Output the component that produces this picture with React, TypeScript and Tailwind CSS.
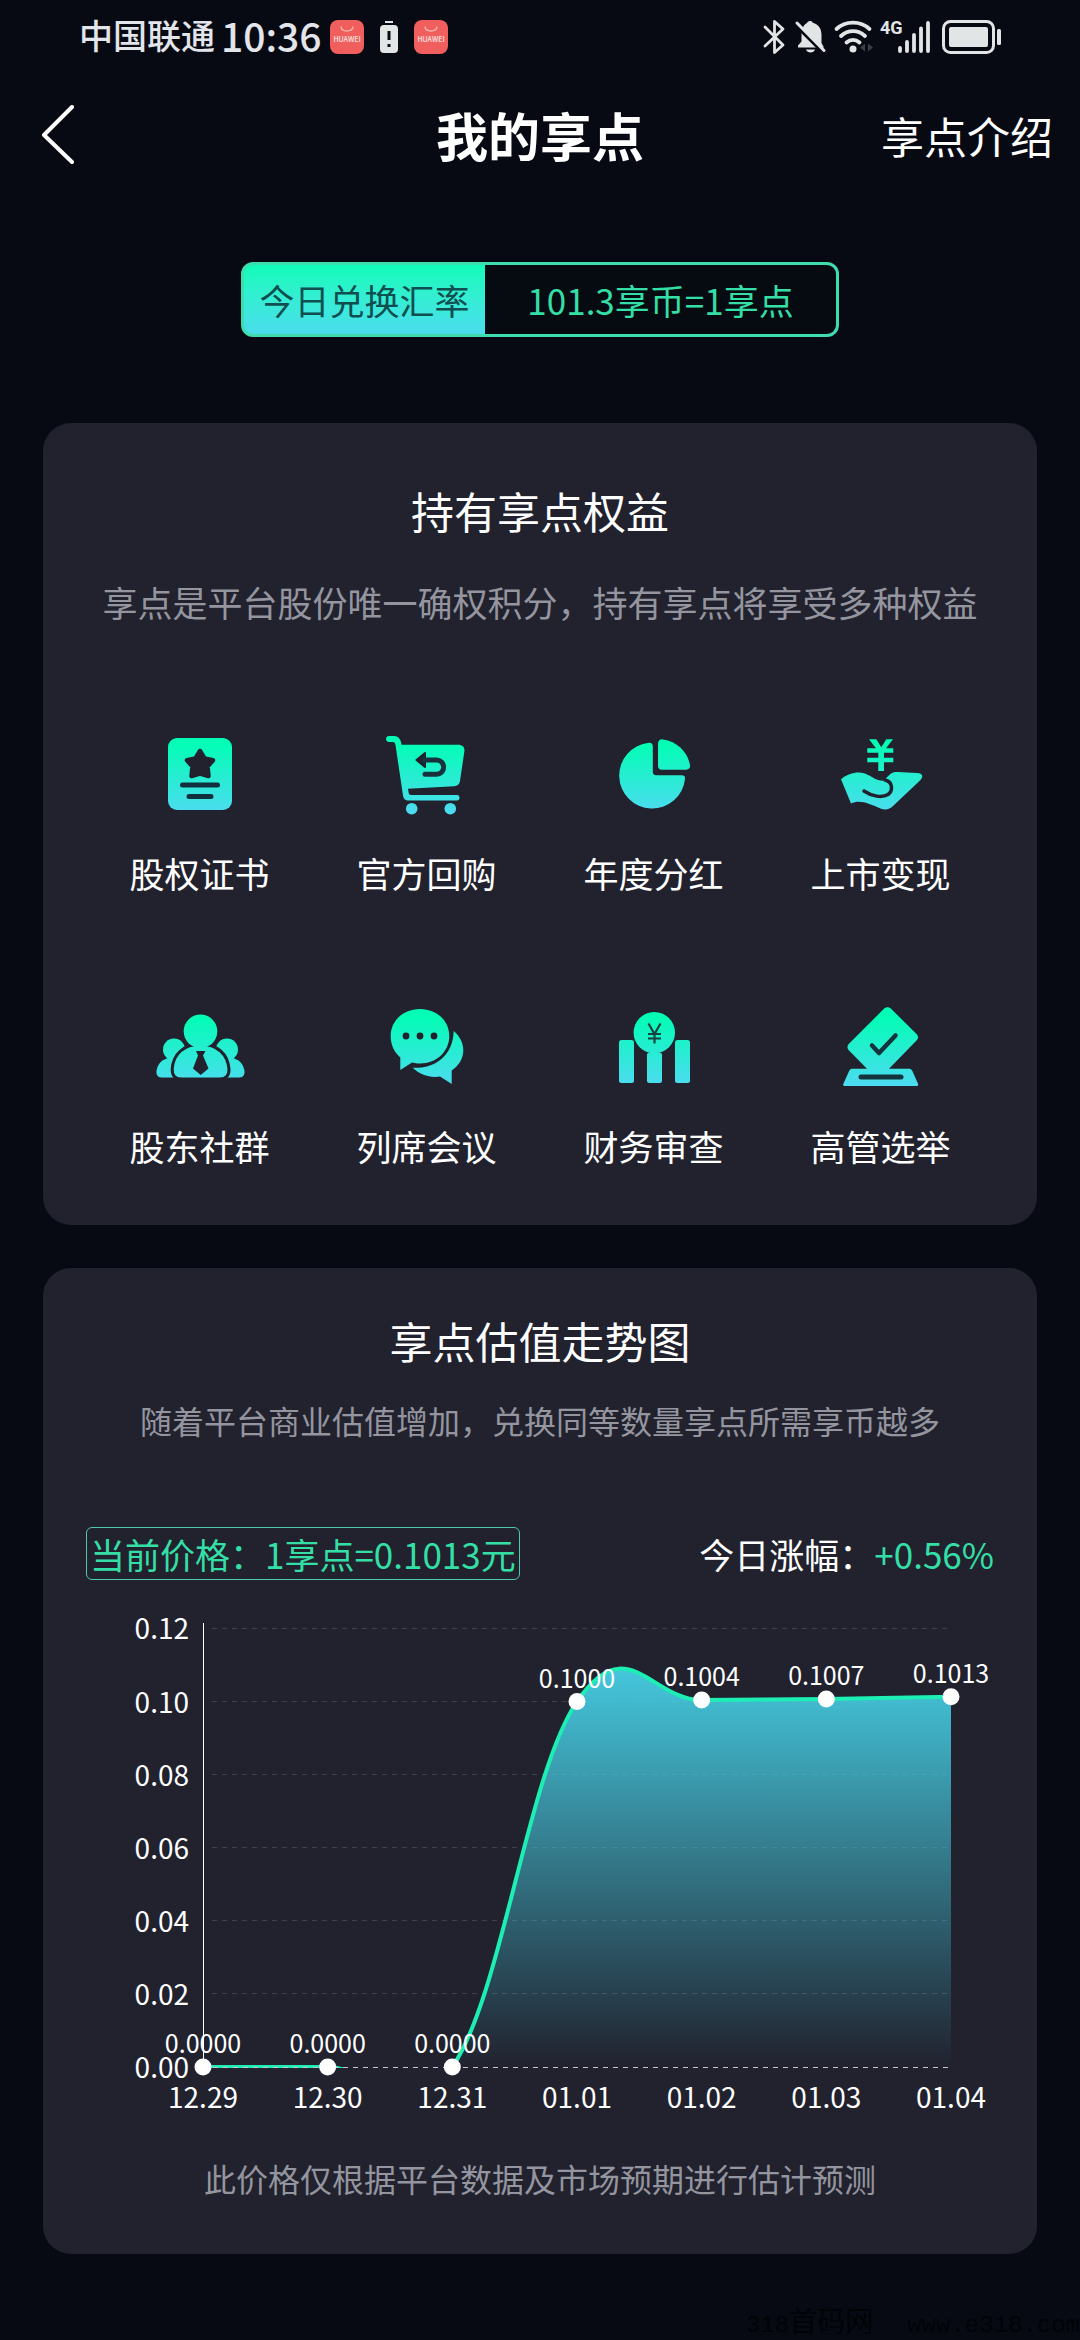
import { useId, type ReactNode } from "react";

interface Benefit {
  label: string;
  icon: ReactNode;
}

interface PricePoint {
  date: string;
  value: number;
}

// Holes in the icons are painted with the card colour
const CARD = "#21222e";

const IconFrame = ({ children }: { children: ReactNode }) => {
  const id = useId();
  return (
    <svg width="90" height="90" viewBox="0 0 90 90" fill={`url(#${id})`} aria-hidden="true">
      <defs>
        <linearGradient id={id} gradientUnits="userSpaceOnUse" x1="0" y1="16" x2="0" y2="82">
          <stop offset="0" stopColor="#04fdb6" />
          <stop offset="1" stopColor="#4bdcef" />
        </linearGradient>
      </defs>
      {children}
    </svg>
  );
};

const CertificateIcon = () => (
  <IconFrame>
    <rect x="13" y="9" width="64" height="72" rx="9" />
    <path
      d="M45 22l4.500 7.500 8.500 1.800-5.500 6.200 1 9.500-8.500-2.500-8.500 2.500 1-9.500-5.500-6.200 8.500-1.800z"
      fill={CARD}
      stroke={CARD}
      strokeWidth="4.500"
      strokeLinejoin="round"
    />
    <path d="M27.500 56h35M34 67.500h22" stroke="#11303d" strokeWidth="5" strokeLinecap="round" />
  </IconFrame>
);

const BuybackIcon = () => (
  <IconFrame>
    <path d="M7 7h5c4 0 7 3 7.500 8.700H76c5 0 7 3 6.300 7L78 52c-.6 3.500-2.500 5-6 5.200L26 59.700l.7 4.300c.3 1.300 1 2 2.500 2H75c3.400 0 3.400 5.500 0 5.500H27c-4 0-5.500-2-6-5L13.500 16c-.3-2-1-3-3-3H7c-4 0-4-6 0-6z" />
    <circle cx="29.700" cy="79.700" r="5.800" />
    <circle cx="68.300" cy="79.700" r="5.800" />
    <path d="M34.500 31l8.500-7v14z" fill={CARD} stroke={CARD} strokeWidth="2" strokeLinejoin="round" />
    <path d="M42 31h12.500a7 7 0 0 1 0 14.300H43" fill="none" stroke="#17313d" strokeWidth="5" strokeLinecap="round" />
  </IconFrame>
);

const DividendIcon = () => (
  <IconFrame>
    <path d="M40 13.700c2.500 0 3.800 1 3.800 3.500V43c0 2 1 3.200 3.200 3.200h25.500c3 0 3.700 1.300 3.500 4A33 33 0 1 1 40 13.700z" />
    <path d="M49 15c0-3 1.700-5 5-4.600A32 32 0 0 1 81 36c.5 3-1.500 4.700-4.500 4.700H53c-2.700 0-4-1.300-4-4z" />
  </IconFrame>
);

const ListingIcon = () => (
  <IconFrame>
    <path d="M33 10.300h7.300l5 8 5-8H57l-7 9h7.300v4.500H48v4.900h9.300v4.500H48V42h-5.700v-8.800h-11v-4.500h11v-4.900h-11v-4.500H40z" />
    <path d="M5 50.300C12 44 22 42 29 44.500c7 3 11 7 18 7.300 4-2.500 7-8.300 12-8.800 6-.5 14 .8 22 1 5 0 7 3 3.500 7L57 77c-3.500 3.500-7.500 4.300-12.500 2.500C34 75 24 70 15 74.500z" />
    <path
      d="M28 62c8 5.500 18 7 24 3.500 5.500-4 4.500-13-3-14.500"
      fill="none"
      stroke={CARD}
      strokeWidth="3.500"
      strokeLinecap="round"
    />
  </IconFrame>
);

const CommunityIcon = () => (
  <IconFrame>
    <circle cx="19" cy="47.500" r="11" />
    <circle cx="72" cy="47.500" r="11" />
    <path d="M7 75.700c-4 0-6-3-5.500-7C3 60 9 55.500 19 55.500V75.700zM84 75.700c4 0 6-3 5.500-7C88 60 82 55.500 72 55.500V75.700z" />
    <path
      d="M27 77.200c-7 0-10-4-9.800-10C18 52 29 42.200 45.500 42.200S73 52 74 67.200c.2 6-3 10-10 10z"
      stroke={CARD}
      strokeWidth="3"
    />
    <rect x="0" y="75.700" width="90" height="4" fill={CARD} />
    <circle cx="45.500" cy="29.300" r="16.800" />
    <path d="M41 49h9.500L48 53.500l5.500 13-7.800 6.500-7.700-6.500 5-13z" fill={CARD} />
  </IconFrame>
);

const MeetingIcon = () => (
  <IconFrame>
    <path d="M38 7c17 0 29.300 12 29.300 27S55 61.500 38 61.500c-2.500 0-6-.5-8-1L18.300 68V55.500C12 50 8.700 42.500 8.700 34 8.700 19 21 7 38 7z" />
    <path d="M71.700 29c6 5 9.600 12 9.600 19.500 0 8-4.500 15-11.600 20V82L58 74.500c-10 1.500-20-1.500-27.300-8.700C54 67 71 53 71.700 29z" />
    <g fill={CARD}>
      <circle cx="24" cy="34" r="3.400" />
      <circle cx="38" cy="34" r="3.400" />
      <circle cx="52" cy="34" r="3.400" />
    </g>
  </IconFrame>
);

const AuditIcon = () => (
  <IconFrame>
    <rect x="10" y="38" width="15" height="43" rx="2.500" />
    <rect x="38" y="50.500" width="15" height="30.500" rx="2.500" />
    <rect x="66" y="38" width="15" height="43" rx="2.500" />
    <circle cx="45.300" cy="30.700" r="20.700" />
    <path d="M39.500 21.500l6 10.500 6-10.500M39 32h13M39 36.500h13M45.500 32v9.500" fill="none" stroke="#14423f" strokeWidth="2.200" />
  </IconFrame>
);

const ElectionIcon = () => (
  <IconFrame>
    <path d="M48 6.700c2-2 5-2 7 0L80.500 32c2 2 2 4.600 0 6.600L53 66.700h19.500c2 0 3 .6 4 2.500l5.500 12.500c.5 1.600 0 2.300-1.600 2.300H9c-1.600 0-2.200-.8-1.600-2.300L13 69.200c.8-1.900 2-2.500 3.800-2.500H31L13 48.500c-2-2-2-4.700 0-6.700z" />
    <path d="M36 43.500l7 7.500 16.500-17.500" fill="none" stroke="#14343d" strokeWidth="4.500" strokeLinecap="round" strokeLinejoin="round" />
    <path d="M25 75h40" stroke="#14343d" strokeWidth="5" strokeLinecap="round" />
  </IconFrame>
);

const benefits: Benefit[] = [
  { label: "股权证书", icon: <CertificateIcon /> },
  { label: "官方回购", icon: <BuybackIcon /> },
  { label: "年度分红", icon: <DividendIcon /> },
  { label: "上市变现", icon: <ListingIcon /> },
  { label: "股东社群", icon: <CommunityIcon /> },
  { label: "列席会议", icon: <MeetingIcon /> },
  { label: "财务审查", icon: <AuditIcon /> },
  { label: "高管选举", icon: <ElectionIcon /> },
];

const prices: PricePoint[] = [
  { date: "12.29", value: 0 },
  { date: "12.30", value: 0 },
  { date: "12.31", value: 0 },
  { date: "01.01", value: 0.1 },
  { date: "01.02", value: 0.1004 },
  { date: "01.03", value: 0.1007 },
  { date: "01.04", value: 0.1013 },
];

const ticks = [0.12, 0.1, 0.08, 0.06, 0.04, 0.02, 0];

const LEFT = 117;
const RIGHT = 865;
const BASE = 467;
const px = (i: number) => LEFT + (i * (RIGHT - LEFT)) / (prices.length - 1);
const py = (value: number) => BASE - value * 3655;

// Smooth curve, each control point sits 20% along the neighbours' direction
const curve = () => {
  const pts = prices.map((p, i) => ({ x: px(i), y: py(p.value) }));
  const at = (i: number) => pts[Math.min(Math.max(i, 0), pts.length - 1)];
  let d = `M${pts[0].x} ${pts[0].y}`;
  for (let i = 1; i < pts.length; i++) {
    const a = at(i - 1);
    const b = at(i);
    const c1x = a.x + (b.x - at(i - 2).x) * 0.2;
    const c1y = a.y + (b.y - at(i - 2).y) * 0.2;
    const c2x = b.x - (at(i + 1).x - a.x) * 0.2;
    const c2y = b.y - (at(i + 1).y - a.y) * 0.2;
    d += `C${c1x} ${c1y} ${c2x} ${c2y} ${b.x} ${b.y}`;
  }
  return d;
};

const PriceChart = () => {
  const line = curve();
  return (
    <svg className="mt-5 block w-full" viewBox="0 0 908 520" role="img" aria-label="享点估值走势图">
      <defs>
        <linearGradient id="area" gradientUnits="userSpaceOnUse" x1="0" y1="68" x2="0" y2={BASE}>
          <stop offset="0" stopColor="#46d0e6" stopOpacity="0.95" />
          <stop offset="1" stopColor="#46d0e6" stopOpacity="0" />
        </linearGradient>
        <clipPath id="plot">
          <rect x={LEFT} y="0" width={RIGHT - LEFT} height={BASE + 1} />
        </clipPath>
      </defs>

      {ticks.map((t) => (
        <g key={t}>
          {t > 0 && (
            <line
              x1={LEFT + 9}
              x2={RIGHT}
              y1={py(t)}
              y2={py(t)}
              stroke="#3f404b"
              strokeWidth="1"
              strokeDasharray="5 5"
              shapeRendering="crispEdges"
            />
          )}
          <text x="103" y={py(t) + 11} textAnchor="end" fontSize="28" fill="#fff">
            {t.toFixed(2)}
          </text>
        </g>
      ))}
      <line x1={LEFT} x2={LEFT} y1="23" y2={BASE} stroke="#fff" strokeWidth="1" shapeRendering="crispEdges" />

      <path d={`${line}V${BASE}H${LEFT}Z`} fill="url(#area)" clipPath="url(#plot)" />
      <path d={line} fill="none" stroke="#1ceeb4" strokeWidth="4" clipPath="url(#plot)" />
      <line
        x1={LEFT}
        x2={RIGHT}
        y1={BASE}
        y2={BASE}
        stroke="#c5c6cf"
        strokeWidth="1"
        strokeDasharray="5 5"
        shapeRendering="crispEdges"
      />

      {prices.map((p, i) => (
        <g key={p.date} fill="#fff" textAnchor="middle">
          <circle cx={px(i)} cy={py(p.value)} r="8.500" />
          <text x={px(i)} y={py(p.value) - 14} fontSize="25">
            {p.value.toFixed(4)}
          </text>
          <text x={px(i)} y={BASE + 41} fontSize="28">
            {p.date}
          </text>
        </g>
      ))}
    </svg>
  );
};

const StoreBadge = () => (
  <svg width="34" height="34" viewBox="0 0 34 34" aria-hidden="true">
    <rect width="34" height="34" rx="8" fill="#f05f5e" />
    <path d="M11 6.500c.5 6 11.500 6 12 0" fill="none" stroke="#fbb0a8" strokeWidth="1.500" />
    <text x="17" y="22" textAnchor="middle" fontSize="7" fontWeight="500" fill="#ffe6e2">
      HUAWEI
    </text>
  </svg>
);

const StatusBar = () => (
  <div className="flex h-[74px] items-center justify-between pl-[79px] pr-[78px] text-[#e2e5ea]">
    <div className="flex items-center">
      <span className="pb-1 text-[34px] leading-none font-medium">中国联通</span>
      <span className="ml-1.5 pb-1 text-[39px] leading-none font-medium">10:36</span>
      <div className="ml-2 flex items-center gap-4">
        <StoreBadge />
        <svg width="18" height="34" viewBox="0 0 18 34" fill="#e2e5e6" aria-hidden="true">
          <path d="M5 1h8v2H5z" />
          <rect y="5" width="18" height="28" rx="4" />
          <path d="M9 11v9M9 24v3" stroke="#0a0d14" strokeWidth="3" />
        </svg>
        <StoreBadge />
      </div>
    </div>
    <svg width="240" height="36" viewBox="0 0 240 36" fill="none" stroke="#e2e5e6" aria-hidden="true">
      <path d="M3 8l18 18-8.500 7.500V2.500L21 10 3 27" strokeWidth="2.800" strokeLinejoin="round" strokeLinecap="round" />
      <path
        d="M48 2c1.500 0 2.300.6 2.800 1.700 6 1.700 8.700 6 8.700 12.300v8l2.500 4.500H36v-2l3.500-4V15c0-5 2-9 5.500-11 .5-1.200 1.500-2 3-2zM44 30.500h9c-1 4-8 4-9 0z"
        fill="#e2e5e6"
        stroke="none"
      />
      <path d="M35 7l29 29" stroke="#070a13" strokeWidth="4" />
      <path d="M35 4l27 27.500" strokeWidth="3" strokeLinecap="round" />
      <path d="M74.500 10c9-8.500 24-8.500 33 0M79 17c7-6.500 17-6.500 24 0M84.500 23.500c4-3.500 9-3.500 13 0" strokeWidth="3.800" strokeLinecap="round" />
      <circle cx="91" cy="30" r="3.500" fill="#e2e5e6" stroke="none" />
      <path d="M103 24.500v8l-5-4zM106 24.500v8l5-4z" fill="#3b3e46" stroke="none" />
      <text x="118" y="15" fontSize="18" fontWeight="700" fill="#e2e5e6" stroke="none" fontFamily="'Liberation Sans Narrow', Roboto, sans-serif">
        4G
      </text>
      <path d="M138 29v3M145 23v9M152 16v16M159 9.500v22.500M166 4v28" strokeWidth="3.800" strokeLinecap="round" />
      <rect x="181.500" y="2.500" width="50" height="31" rx="7" strokeWidth="3" />
      <rect x="187" y="8" width="39" height="20" rx="2" fill="#e2e5e6" stroke="none" />
      <rect x="235" y="10" width="4" height="16" rx="1.500" fill="#e2e5e6" stroke="none" />
    </svg>
  </div>
);

const App = () => {
  return (
    <div
      lang="zh-CN"
      className="flex min-h-screen flex-col overflow-hidden bg-[#070a13] font-['Noto_Sans_CJK_SC',sans-serif] text-white"
    >
      <StatusBar />

      <header className="grid h-[122px] grid-cols-3 items-center px-[27px]">
        <button type="button" aria-label="返回" className="ml-3.5 justify-self-start">
          <svg width="34" height="60" viewBox="0 0 34 60" fill="none" stroke="#fff" strokeWidth="4" strokeLinecap="round" strokeLinejoin="round">
            <path d="M31 2L3 30l28 27" />
          </svg>
        </button>
        <h1 className="text-center text-[52px] leading-[60px] font-bold">我的享点</h1>
        <a href="#intro" className="justify-self-end text-[43px] leading-[60px]">
          享点介绍
        </a>
      </header>

      <div className="mx-auto mt-[66px] flex h-[75px] overflow-hidden rounded-xl border-3 border-[#3fdcae] bg-gradient-to-b from-[#04fdb6] to-[#4bdcef] bg-origin-border text-[35px] leading-[69px]">
        <span className="w-[241px] text-center text-[#0f4f50]">今日兑换汇率</span>
        <span className="w-[351px] bg-[#060a11] text-center text-[#34dfa6]">101.3享币=1享点</span>
      </div>

      <section className="mx-[43px] mt-[86px] rounded-[28px] bg-[#21222e] px-[43px] pt-[57px] pb-[53px]">
        <h2 className="text-center text-[43px] leading-[60px]">持有享点权益</h2>
        <p className="mt-9 text-center text-[35px] leading-[52px] whitespace-nowrap text-[#94959f]">
          享点是平台股份唯一确权积分，持有享点将享受多种权益
        </p>
        <ul className="mt-[101px] grid grid-cols-4 gap-y-[103px]">
          {benefits.map((b) => (
            <li key={b.label} className="flex flex-col items-center">
              {b.icon}
              <span className="mt-7 text-[35px] leading-[52px]">{b.label}</span>
            </li>
          ))}
        </ul>
      </section>

      <section className="mx-[43px] mt-[43px] rounded-[28px] bg-[#21222e] px-[43px] pt-[42px] pb-[52px]">
        <h2 className="text-center text-[43px] leading-[60px]">享点估值走势图</h2>
        <p className="mt-[26px] text-center text-[32px] leading-[48px] text-[#94959f]">
          随着平台商业估值增加，兑换同等数量享点所需享币越多
        </p>
        <div className="mt-[83px] flex items-center justify-between text-[35px] leading-[51px] whitespace-nowrap">
          <p className="rounded-md border border-[#4fc9a8] px-[3px] text-[#34dfa6]">当前价格：1享点=0.1013元</p>
          <p>
            今日涨幅：<span className="text-[#34dfa6]">+0.56%</span>
          </p>
        </div>
        <PriceChart />
        <p className="mt-[34px] text-center text-[32px] leading-[48px] text-[#94959f]">
          此价格仅根据平台数据及市场预期进行估计预测
        </p>
      </section>

      <footer className="mt-auto flex items-center justify-end gap-[34px] font-['Liberation_Mono','Noto_Sans_CJK_SC',monospace] text-2xl leading-7 whitespace-nowrap text-[#020307]">
        <span>
          318<span className="text-[28px]">首码网</span>
        </span>
        <span>www.e318.com</span>
      </footer>
    </div>
  );
};

export default App;
